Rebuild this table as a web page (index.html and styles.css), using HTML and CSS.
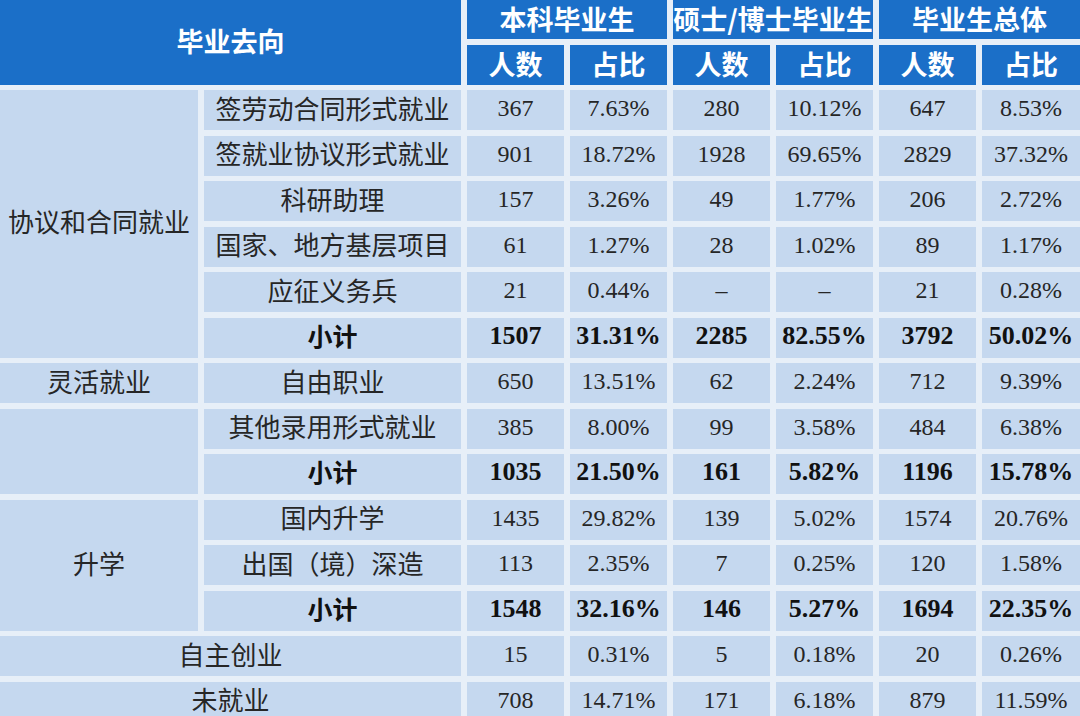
FILE: index.html
```html
<!DOCTYPE html>
<html lang="zh-CN">
<head>
<meta charset="utf-8">
<title>毕业去向统计</title>
<link rel="stylesheet" href="styles.css">
</head>
<body>
<div class="sheet">
  <div class="cell head c2 r2">毕业去向</div>
  <div class="cell head c2">本科毕业生</div>
  <div class="cell head c2">硕士/博士毕业生</div>
  <div class="cell head c2">毕业生总体</div>
  <div class="cell head">人数</div><div class="cell head">占比</div>
  <div class="cell head">人数</div><div class="cell head">占比</div>
  <div class="cell head">人数</div><div class="cell head">占比</div>

  <div class="cell cat r6">协议和合同就业</div>
  <div class="cell txt">签劳动合同形式就业</div>
  <div class="cell num">367</div><div class="cell num">7.63%</div><div class="cell num">280</div><div class="cell num">10.12%</div><div class="cell num">647</div><div class="cell num">8.53%</div>
  <div class="cell txt">签就业协议形式就业</div>
  <div class="cell num">901</div><div class="cell num">18.72%</div><div class="cell num">1928</div><div class="cell num">69.65%</div><div class="cell num">2829</div><div class="cell num">37.32%</div>
  <div class="cell txt">科研助理</div>
  <div class="cell num">157</div><div class="cell num">3.26%</div><div class="cell num">49</div><div class="cell num">1.77%</div><div class="cell num">206</div><div class="cell num">2.72%</div>
  <div class="cell txt">国家、地方基层项目</div>
  <div class="cell num">61</div><div class="cell num">1.27%</div><div class="cell num">28</div><div class="cell num">1.02%</div><div class="cell num">89</div><div class="cell num">1.17%</div>
  <div class="cell txt">应征义务兵</div>
  <div class="cell num">21</div><div class="cell num">0.44%</div><div class="cell num">–</div><div class="cell num">–</div><div class="cell num">21</div><div class="cell num">0.28%</div>
  <div class="cell txt sub">小计</div>
  <div class="cell num sub">1507</div><div class="cell num sub">31.31%</div><div class="cell num sub">2285</div><div class="cell num sub">82.55%</div><div class="cell num sub">3792</div><div class="cell num sub">50.02%</div>

  <div class="cell cat">灵活就业</div>
  <div class="cell txt">自由职业</div>
  <div class="cell num">650</div><div class="cell num">13.51%</div><div class="cell num">62</div><div class="cell num">2.24%</div><div class="cell num">712</div><div class="cell num">9.39%</div>

  <div class="cell cat r2"></div>
  <div class="cell txt">其他录用形式就业</div>
  <div class="cell num">385</div><div class="cell num">8.00%</div><div class="cell num">99</div><div class="cell num">3.58%</div><div class="cell num">484</div><div class="cell num">6.38%</div>
  <div class="cell txt sub">小计</div>
  <div class="cell num sub">1035</div><div class="cell num sub">21.50%</div><div class="cell num sub">161</div><div class="cell num sub">5.82%</div><div class="cell num sub">1196</div><div class="cell num sub">15.78%</div>

  <div class="cell cat r3">升学</div>
  <div class="cell txt">国内升学</div>
  <div class="cell num">1435</div><div class="cell num">29.82%</div><div class="cell num">139</div><div class="cell num">5.02%</div><div class="cell num">1574</div><div class="cell num">20.76%</div>
  <div class="cell txt">出国（境）深造</div>
  <div class="cell num">113</div><div class="cell num">2.35%</div><div class="cell num">7</div><div class="cell num">0.25%</div><div class="cell num">120</div><div class="cell num">1.58%</div>
  <div class="cell txt sub">小计</div>
  <div class="cell num sub">1548</div><div class="cell num sub">32.16%</div><div class="cell num sub">146</div><div class="cell num sub">5.27%</div><div class="cell num sub">1694</div><div class="cell num sub">22.35%</div>

  <div class="cell txt c2">自主创业</div>
  <div class="cell num">15</div><div class="cell num">0.31%</div><div class="cell num">5</div><div class="cell num">0.18%</div><div class="cell num">20</div><div class="cell num">0.26%</div>
  <div class="cell txt c2">未就业</div>
  <div class="cell num">708</div><div class="cell num">14.71%</div><div class="cell num">171</div><div class="cell num">6.18%</div><div class="cell num">879</div><div class="cell num">11.59%</div>
</div>
</body>
</html>
```
FILE: styles.css
```css
html, body {
  margin: 0;
  padding: 0;
  background: #e7eff8;
}

body {
  width: 1080px;
  height: 716px;
  overflow: hidden;
}

.sheet {
  display: grid;
  grid-template-columns: 198px 257px 97px 97px 97px 97px 97px 98px;
  grid-template-rows: 39px 40px repeat(14, 40px);
  column-gap: 6px;
  row-gap: 5.5px;
  font-family: "Noto Sans CJK SC", "Noto Sans", sans-serif;
  color: #262626;
}

.cell {
  display: flex;
  align-items: center;
  justify-content: center;
  background: #c5d8ef;
  white-space: nowrap;
  overflow: hidden;
  line-height: 1;
  padding-bottom: 5px;
  box-sizing: border-box;
}

.head {
  background: #1b6fc8;
  color: #ffffff;
  font-weight: 700;
  font-size: 27px;
  padding-bottom: 3px;
}

.c2 { grid-column: span 2; }
.r2 { grid-row: span 2; }
.r3 { grid-row: span 3; }
.r6 { grid-row: span 6; }

.cat, .txt {
  font-size: 26px;
}

.num {
  font-family: "Liberation Serif", "Noto Sans CJK SC", serif;
  font-size: 24px;
  padding-bottom: 4px;
}

.sub {
  font-weight: 700;
  color: #111111;
}

.txt.sub {
  font-size: 25px;
}

.num.sub {
  font-size: 26px;
}
```
